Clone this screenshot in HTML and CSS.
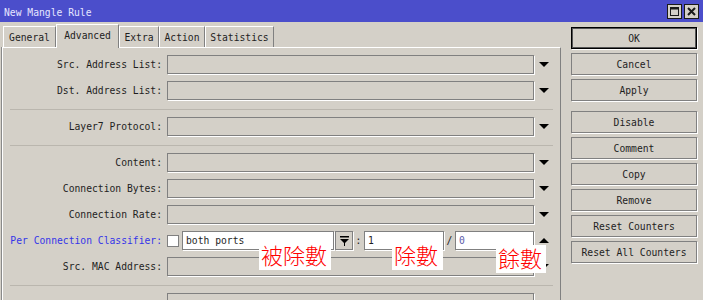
FILE: index.html
```html
<!DOCTYPE html>
<html lang="en">

<head>
    <meta charset="UTF-8">
    <title>New Mangle Rule</title>
    <link rel="stylesheet" href="styles.css">
</head>

<body>
    <div class="titlebar">
        <span class="title">New Mangle Rule</span>
        <div class="winbtns">
            <svg width="15" height="15" viewBox="0 0 15 15">
                <rect x="0.5" y="0.5" width="14" height="14" fill="#d4d0c8" stroke="#1a1a1a"/>
                <rect x="3.5" y="3.5" width="8" height="8" fill="none" stroke="#1a1a1a"/>
                <line x1="3" y1="4.5" x2="12" y2="4.5" stroke="#1a1a1a" stroke-width="2"/>
            </svg>
            <svg width="15" height="15" viewBox="0 0 15 15">
                <rect x="0.5" y="0.5" width="14" height="14" fill="#d4d0c8" stroke="#1a1a1a"/>
                <path d="M4 4 L11 11 M11 4 L4 11" stroke="#1a1a1a" stroke-width="2"/>
            </svg>
        </div>
    </div>

    <div class="main">
        <div class="left">
            <div class="tabs">
                <div class="tab t-general">General</div>
                <div class="tab t-advanced active">Advanced</div>
                <div class="tab t-extra">Extra</div>
                <div class="tab t-action">Action</div>
                <div class="tab t-stats">Statistics</div>
            </div>

            <div class="panel">
                <div class="row">
                    <label>Src. Address List:</label>
                    <div class="field"></div>
                    <span class="arrow down"></span>
                </div>
                <div class="row">
                    <label>Dst. Address List:</label>
                    <div class="field"></div>
                    <span class="arrow down"></span>
                </div>

                <div class="sep"></div>

                <div class="row">
                    <label>Layer7 Protocol:</label>
                    <div class="field"></div>
                    <span class="arrow down"></span>
                </div>

                <div class="sep"></div>

                <div class="row">
                    <label>Content:</label>
                    <div class="field"></div>
                    <span class="arrow down"></span>
                </div>
                <div class="row">
                    <label>Connection Bytes:</label>
                    <div class="field"></div>
                    <span class="arrow down"></span>
                </div>
                <div class="row">
                    <label>Connection Rate:</label>
                    <div class="field"></div>
                    <span class="arrow down"></span>
                </div>
                <div class="row">
                    <label class="link">Per Connection Classifier:</label>
                    <div class="pcc">
                        <span class="check"></span>
                        <div class="field white combo">both ports</div>
                        <div class="field dropbtn">
                            <svg width="9" height="10" viewBox="0 0 9 10">
                                <rect x="0" y="0" width="9" height="1.5" fill="#000"/>
                                <polygon points="0,3 9,3 4.5,7.5" fill="#000"/>
                                <rect x="4" y="7" width="1" height="3" fill="#000"/>
                            </svg>
                        </div>
                        <span class="sym">:</span>
                        <div class="field white num">1</div>
                        <span class="sym">/</span>
                        <div class="field white num last">0</div>
                    </div>
                    <span class="arrow up"></span>
                </div>
                <div class="row">
                    <label>Src. MAC Address:</label>
                    <div class="field"></div>
                    <span class="arrow down"></span>
                </div>

                <div class="sep"></div>

                <div class="row">
                    <label></label>
                    <div class="field"></div>
                    <span class="arrow down"></span>
                </div>
            </div>
        </div>

        <div class="buttons">
            <div class="btn default">OK</div>
            <div class="btn">Cancel</div>
            <div class="btn">Apply</div>
            <div class="btn spaced">Disable</div>
            <div class="btn">Comment</div>
            <div class="btn">Copy</div>
            <div class="btn">Remove</div>
            <div class="btn">Reset Counters</div>
            <div class="btn">Reset All Counters</div>
        </div>
    </div>

    <!-- red notes pasted over the form -->
    <div class="note n1">被除數</div>
    <div class="note n2">除數</div>
    <div class="note n3">餘數</div>
</body>

</html>
```

FILE: styles.css
```css
body {
    margin: 0;
    width: 703px;
    height: 300px;
    overflow: hidden;
    position: relative;
    background-color: #d4d0c8;
    font-family: "DejaVu Sans Mono", monospace;
    font-size: 9.7px;
    color: #1e1e1e;
}

.titlebar {
    height: 22px;
    box-sizing: border-box;
    padding: 3px 4px 0 4px;
    background-color: #4b4ecb;
    display: flex;
    align-items: center;
    justify-content: space-between;
}

.title {
    color: #e6e6ff;
}

.winbtns {
    display: flex;
    gap: 2px;
    align-self: flex-start;
    margin-top: 1px;
}

.winbtns svg {
    display: block;
}

.main {
    display: flex;
}

.left {
    width: 561px;
}

.tabs {
    display: flex;
    align-items: flex-end;
    height: 25px;
    padding-left: 3px;
}

.tab {
    height: 21px;
    box-sizing: border-box;
    border-top: 1px solid #fff;
    border-left: 1px solid #fff;
    border-right: 1px solid #808080;
    display: flex;
    align-items: center;
    justify-content: center;
}

.tab.active {
    height: 24px;
    margin-bottom: -1px;
    padding-bottom: 2px;
    position: relative;
    z-index: 1;
    background-color: #d4d0c8;
}

.t-general { width: 53px; }
.t-advanced { width: 63px; }
.t-extra { width: 40px; }
.t-action { width: 46px; }
.t-stats { width: 69px; }

.panel {
    margin-left: 2px;
    width: 559px;
    height: 253px;
    overflow: hidden;
    box-sizing: border-box;
    border-top: 1px solid #fff;
    border-left: 1px solid #fff;
    border-right: 1px solid #808080;
    box-shadow: -1px 0 0 #8a8a8a;
    padding-top: 7px;
    display: flex;
    flex-direction: column;
    gap: 7px;
}

.row {
    display: grid;
    grid-template-columns: 159px 367px 10px;
    column-gap: 5px;
    align-items: center;
    height: 19px;
    flex-shrink: 0;
}

.row label {
    text-align: right;
    white-space: nowrap;
}

.row label.link {
    color: #3535e8;
}

.sep {
    height: 1px;
    flex-shrink: 0;
    margin-top: 2px;
    margin-left: 7px;
    width: 543px;
    background-color: #bab6ae;
}

.field {
    height: 19px;
    box-sizing: border-box;
    border: 1px solid #808080;
    box-shadow: 1px 1px 0 #fff;
}

.field.white {
    background-color: #fff;
    display: flex;
    align-items: center;
    padding-left: 3px;
}

.arrow {
    width: 0;
    height: 0;
    border-left: 5px solid transparent;
    border-right: 5px solid transparent;
}

.arrow.down {
    border-top: 5px solid #000;
}

.arrow.up {
    border-bottom: 5px solid #000;
}

.pcc {
    display: flex;
    align-items: center;
    height: 19px;
}

.check {
    width: 12px;
    height: 12px;
    box-sizing: border-box;
    border: 1px solid #808080;
    background-color: #fff;
    margin-right: 3px;
}

.combo {
    width: 152px;
}

.dropbtn {
    width: 18px;
    margin-left: 1px;
    display: flex;
    align-items: center;
    justify-content: center;
}

.dropbtn svg {
    display: block;
}

.sym {
    width: 11px;
    text-align: center;
}

.num {
    width: 80px;
}

.num.last {
    width: 79px;
    color: #5a5aa8;
}

.buttons {
    margin-left: 10px;
    padding-top: 5px;
    width: 126px;
    display: flex;
    flex-direction: column;
    gap: 4px;
}

.btn {
    height: 22px;
    box-sizing: border-box;
    border: 1px solid #808080;
    box-shadow: 1px 1px 0 #fff;
    display: flex;
    align-items: center;
    justify-content: center;
}

.btn.default {
    border-color: #000;
    box-shadow: inset 0 0 0 1px #555, 1px 1px 0 #fff;
}

.btn.spaced {
    margin-top: 6px;
}

.note {
    position: absolute;
    height: 28px;
    box-sizing: border-box;
    padding-left: 2px;
    background-color: #fff;
    color: #f00;
    font-family: "Noto Sans CJK TC", sans-serif;
    font-size: 22px;
    font-weight: 300;
    line-height: 24px;
    white-space: nowrap;
}

.n1 {
    left: 259px;
    top: 242px;
    width: 72px;
}

.n2 {
    left: 392px;
    top: 242px;
    width: 51px;
}

.n3 {
    left: 496px;
    top: 245px;
    width: 50px;
}
```
